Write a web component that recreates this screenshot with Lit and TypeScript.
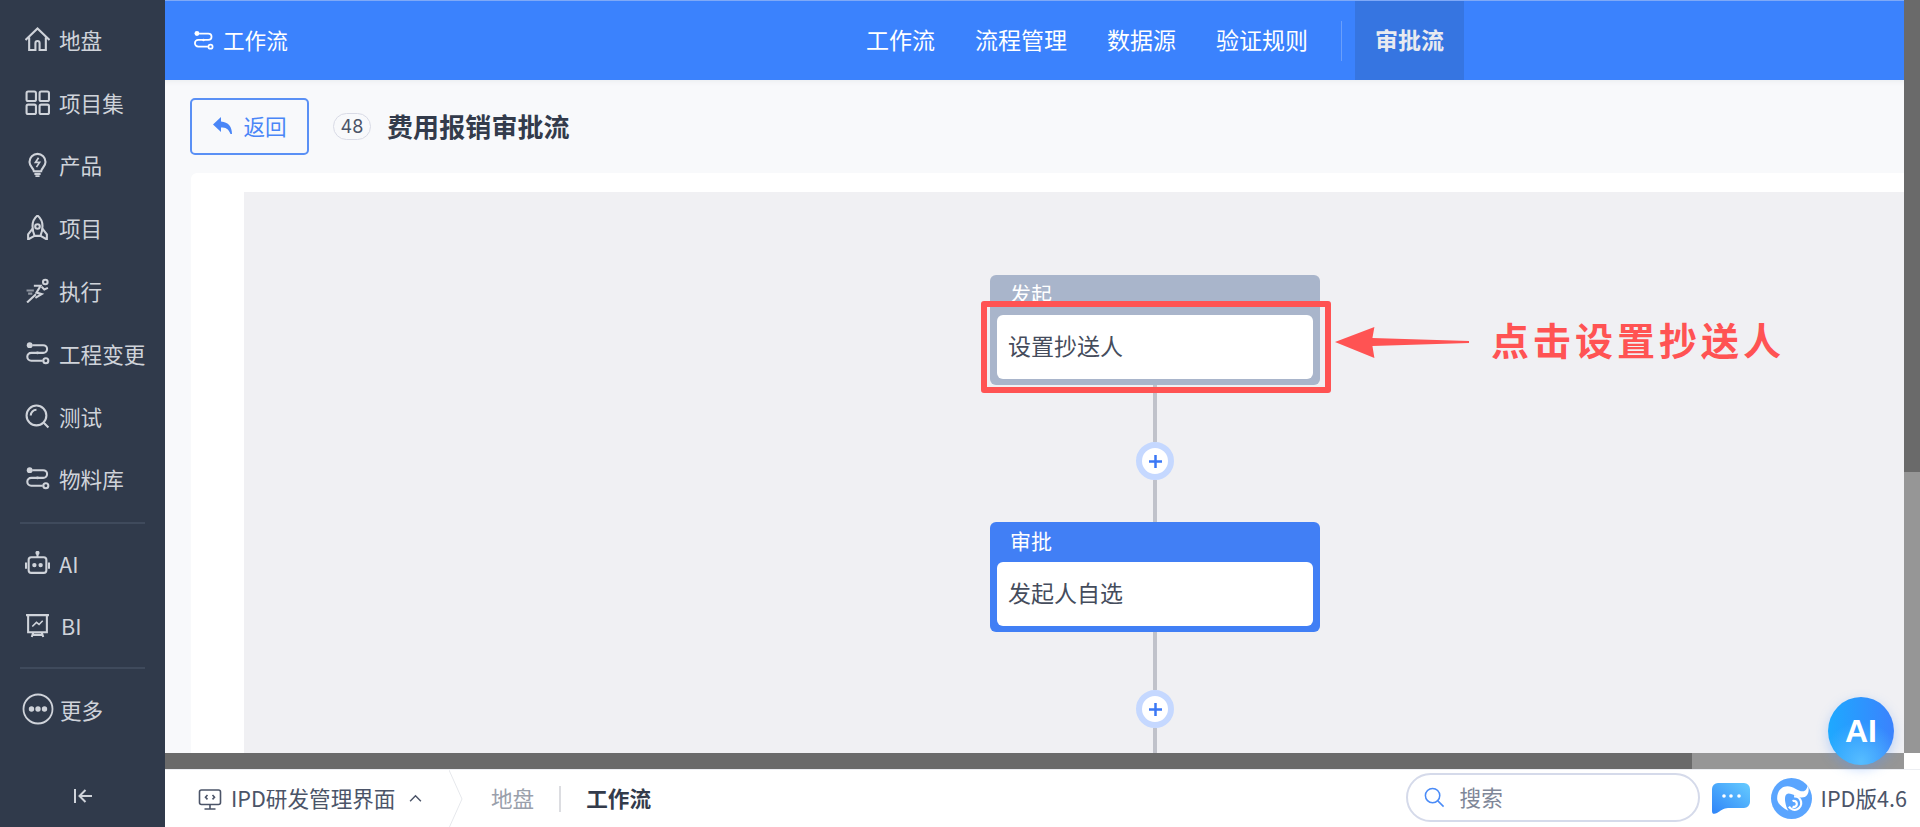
import { LitElement, html, css, svg } from "lit";
import { customElement } from "lit/decorators.js";

const flowIcon = svg`<circle cx="4.5" cy="4" r="2.8" fill="currentColor" stroke="none"/><path d="M7 4h10.5a3.6 3.6 0 0 1 0 7.4H6a3.8 3.8 0 0 0 0 7.6h11"/><circle cx="12" cy="11.4" r="1.4" fill="currentColor" stroke="none"/><circle cx="20" cy="19" r="2.4"/>`;

const NAV = [
  { label: "地盘", icon: svg`<path d="M.5 12.500 12 1.500l11.500 11M4 10v12h6v-6.500a2 2 0 0 1 4 0V22h6V10"/>` },
  { label: "项目集", icon: svg`<rect x="1.500" y="1.500" width="9" height="9" rx="1.500"/><rect x="14" y="1.500" width="9" height="9" rx="1.500"/><rect x="1.500" y="14" width="9" height="9" rx="1.500"/><rect x="14" y="14" width="9" height="9" rx="1.500"/>` },
  { label: "产品", icon: svg`<path d="M8.500 18.500c0-3-4.200-4.200-4.200-9a7.700 7.700 0 0 1 15.400 0c0 4.800-4.200 6-4.200 9z"/><path d="M13 5.500 10 10h4l-3 4.500" stroke-width="1.600"/><path d="M9 21h6M10 23.300h4"/>` },
  { label: "项目", icon: svg`<path d="M12 .5c3.400 2.800 4.800 6.200 4.800 10 0 3.600-.8 6.800-2 9.500H9.200c-1.200-2.700-2-5.900-2-9.500 0-3.800 1.400-7.200 4.800-10z"/><circle cx="12" cy="11" r="2.200"/><path d="M7.300 13 3 18.500v5l6-3.500M16.700 13l4.300 5.500v5L15 20"/>` },
  { label: "执行", icon: svg`<circle cx="19.500" cy="3.800" r="2.200"/><path d="M8.500 7.500h6.500l-4 6.500 5 1.500-6 3.500M16 8.500l2.500 2.500 3.500-1.500M10.500 15.500 2 23.500"/><path d="M1.500 12h7M3 15h4" opacity=".6"/>` },
  { label: "工程变更", icon: flowIcon },
  { label: "测试", icon: svg`<circle cx="11" cy="11" r="9.500"/><path d="m18 18 4.500 4.500M5.500 11A5.500 5.500 0 0 1 11 5.500"/>` },
  { label: "物料库", icon: flowIcon },
];

const searchIcon = svg`<circle cx="10" cy="10" r="7.500"/><path d="m15.500 15.500 6 6"/>`;

@customElement("nav-item")
class NavItem extends LitElement {
  static properties = { label: {} };
  declare label: string;
  static styles = css`
    :host { display: flex; align-items: center; height: 62.8px; padding-left: 25px; gap: 9px; color: #cfd3da; font-size: 21.6px; }
    ::slotted(svg) { width: 25px; height: 25px; fill: none; stroke: currentColor; stroke-width: 2; flex: none; }
  `;
  render() { return html`<slot></slot><span>${this.label}</span>`; }
}

@customElement("app-root")
class AppRoot extends LitElement {
  static styles = css`
    :host { display: grid; grid-template-columns: 165px 1fr; width: 1920px; height: 827px; overflow: hidden; position: relative;
      font-family: "Noto Sans CJK SC", "Noto Sans", sans-serif; background: #fff; }
    * { box-sizing: border-box; }

    .side { background: #303a4b; display: flex; flex-direction: column; padding-top: 8px; }
    .rule { height: 2px; background: #3f4a5c; margin: 11.6px 20px 9px; flex: none; }
    .rule.a { margin: 11px 20px 13px; }
    .rows-ai nav-item { height: 61.500px; }
    .rows-ai nav-item.bi { gap: 11px; }
    .more { color: #cfd3da; display: flex; align-items: center; height: 55px; padding-left: 22px; gap: 6px; font-size: 21.6px; }
    .more svg { width: 32px; height: 32px; fill: none; stroke: currentColor; stroke-width: 1.8; }
    .collapse { margin-top: auto; height: 63px; display: flex; justify-content: center; align-items: center; color: #cfd3da; }
    .collapse svg { width: 22px; height: 20px; fill: none; stroke: currentColor; stroke-width: 2; }

    .main { display: flex; flex-direction: column; min-width: 0; height: 827px; }
    .upper { flex: 1; display: flex; min-height: 0; }
    .col { flex: 1; display: flex; flex-direction: column; min-width: 0; }
    .head { height: 80px; flex: none; background: #3b82fd; color: #fff; border-top: 1px solid #7fa9f7; display: flex; align-items: center; }
    .brand { display: flex; align-items: center; gap: 9px; padding-left: 28px; font-size: 21.6px; width: 681px; flex: none; }
    .brand span { padding-bottom: 2px; }
    .brand svg { width: 21px; height: 21px; fill: none; stroke: currentColor; stroke-width: 2; }
    .tabs { display: flex; align-items: stretch; height: 100%; font-size: 23px; }
    .tab { display: flex; align-items: center; padding: 0 20px 3px; }
    .sep { width: 1px; height: 40px; background: #6a9ffb; align-self: center; margin: 0 13px; }
    .tab.on { background: #3675e1; font-weight: 700; color: #e8eaf0; }

    .page { flex: 1; background: #f8f9fb; padding: 0 0 0 25px; min-height: 0; display: flex; flex-direction: column; box-shadow: inset 0 6px 6px -6px #e4e6ea; }
    .bar { height: 93px; flex: none; display: flex; align-items: center; gap: 24px; }
    .back { width: 119px; height: 57px; border: 2px solid #5a90f5; border-radius: 5px; color: #4a86f7; font-size: 21.6px; display: flex; align-items: center; justify-content: center; gap: 9px; }
    .back span { padding-bottom: 2px; }
    .back svg { width: 22px; height: 20px; fill: currentColor; margin-bottom: 2px; }
    .title { display: flex; align-items: center; gap: 16px; }
    .count { width: 38px; height: 27px; border: 1px solid #d9dbe6; border-radius: 14px; display: flex; align-items: center; justify-content: center; font-size: 18px; color: #4b5468; font-family: "Inter", sans-serif; }
    .name { font-size: 26px; font-weight: 700; color: #333b4b; padding-bottom: 2px; letter-spacing: .1px; }
    .card { flex: 1; background: #fff; margin-left: 1px; border-radius: 6px 0 0 0; padding: 19px 0 0 53px; min-height: 0; display: flex; }
    .canvas { flex: 1; background: #f0f0f3; overflow: hidden; position: relative; padding: 83px 0 0 746px; }

    .flow { width: 330px; display: flex; flex-direction: column; align-items: center; }
    .node { width: 330px; height: 110px; border-radius: 6px; padding: 7px 7px 6px; display: flex; flex-direction: column; flex: none; color: #fff; font-size: 21px; }
    .node.start { background: #a9b5cb; }
    .node.ok { background: #417ff5; }
    .ntitle { height: 33px; padding-left: 13px; line-height: 22px; flex: none; }
    .nbody { flex: 1; background: #fff; border-radius: 6px; color: #454c5c; font-size: 23px; display: flex; align-items: center; padding: 0 0 5px 11px; }
    .wire { width: 4px; background: #c0c2ca; flex: none; }
    .w1 { height: 57px; } .w2 { height: 42px; } .w3 { height: 58px; }
    .plus { width: 38px; height: 38px; flex: none; border-radius: 50%; border: 6px solid #c5d8ff; background: #fff; display: flex; align-items: center; justify-content: center; }
    .plus svg { width: 15px; height: 15px; stroke: #3b78f5; stroke-width: 2.5; fill: none; }

    .hs { height: 16px; flex: none; background: #969696; display: flex; }
    .hs i { width: 1527px; background: #6a6a6a; }
    .vs { width: 16px; flex: none; display: flex; flex-direction: column; background: #969696; margin-bottom: 16px; }
    .vs i { height: 472px; background: #6a6a6a; }

    .foot { height: 58px; flex: none; display: flex; align-items: center; background: #fff; border-top: 1px solid #eceef2; color: #4b5468; font-size: 21.6px; position: relative; }
    .foot span { padding-bottom: 3px; }
    .foot .div { padding: 0; }
    .env { display: flex; align-items: center; gap: 9px; padding-left: 33px; width: 285px; flex: none; white-space: nowrap; }
    .env svg.m { width: 24px; height: 24px; fill: none; stroke: #4b5468; stroke-width: 1.6; flex: none; }
    .env svg.c { width: 13px; height: 9px; fill: none; stroke: #4b5468; stroke-width: 1.6; margin-left: 5px; flex: none; }
    .chev { position: absolute; left: 284px; top: 0; width: 14px; height: 58px; fill: none; stroke: #e6e8ec; stroke-width: 1; }
    .crumb { margin-left: 41px; color: #9aa0ab; }
    .div { width: 2px; height: 26px; background: #dcdde1; margin: 0 25px; }
    .cur { font-weight: 700; color: #333b4b; }
    .right { margin-left: auto; display: flex; align-items: center; }
    .search { width: 294px; height: 49px; border: 2px solid #d5daea; border-radius: 25px; display: flex; align-items: center; padding-left: 15px; gap: 14px; color: #7f8798; margin-top: -2px; }
    .search svg { width: 23px; height: 23px; fill: none; stroke: #4a8bf7; stroke-width: 1.6; }
    .chat { width: 38px; height: 32px; margin-left: 12px; }
    .logo { width: 41px; height: 41px; margin-left: 21px; }
    .ver { margin: 0 13px 0 9px; color: #4b5468; }

    .ai { position: absolute; left: 1828px; top: 697px; width: 66px; height: 68px; border-radius: 50%; color: #fff; font: 700 32px "Liberation Sans", sans-serif; display: flex; align-items: center; justify-content: center;
      background: radial-gradient(circle at 50% 95%, #56bdff 0, rgba(86,189,255,0) 55%), linear-gradient(90deg, #1ea9ff, #3b82fd); box-shadow: 0 4px 12px rgba(80,150,255,.35); }
    .mark { position: absolute; left: 981px; top: 301px; width: 350px; height: 92px; border: 6px solid #ff5353; border-radius: 3px; }
    .arrow { position: absolute; left: 1334px; top: 324px; width: 136px; height: 36px; fill: #ff5353; }
    .note { position: absolute; left: 1491px; top: 314px; line-height: 50px; font-size: 38px; font-weight: 700; color: #ff5353; letter-spacing: 4px; white-space: nowrap; }
  `;

  render() {
    const plus = html`<div class="plus"><svg viewBox="0 0 15 15"><path d="M7.500 1v13M1 7.500h13"/></svg></div>`;
    return html`
      <aside class="side">
        ${NAV.map((n) => html`<nav-item .label=${n.label}><svg viewBox="0 0 24 24">${n.icon}</svg></nav-item>`)}
        <div class="rule"></div>
        <div class="rows-ai">
          <nav-item .label=${"AI"}><svg viewBox="0 0 24 24"><path d="M12 1v5"/><circle cx="12" cy="1.800" r="1" fill="currentColor"/><rect x="3.500" y="6" width="17" height="15" rx="2.500"/><path d="M1 11v6M23 11v6"/><circle cx="9" cy="13.500" r="1.100" fill="currentColor"/><circle cx="15" cy="13.500" r="1.100" fill="currentColor"/></svg></nav-item>
          <nav-item class="bi" .label=${"BI"}><svg viewBox="0 0 24 24"><path d="M1 2h22M3 2v16.500h18V2M8 18.500 6.500 23M16 18.500l1.500 4.500M7.500 21h9"/><path d="m7 13 4-4 2.500 2L17 7.500" stroke-width="1.500"/></svg></nav-item>
        </div>
        <div class="rule a"></div>
        <div class="more"><svg viewBox="0 0 32 32"><circle cx="16" cy="16" r="14.500"/><circle cx="9.500" cy="16" r="1.800" fill="currentColor"/><circle cx="16" cy="16" r="1.800" fill="currentColor"/><circle cx="22.500" cy="16" r="1.800" fill="currentColor"/></svg><span>更多</span></div>
        <div class="collapse"><svg viewBox="0 0 22 20"><path d="M3 3v14M20 10H8M13.500 4 7.500 10l6 6"/></svg></div>
      </aside>
      <div class="main">
        <div class="upper">
          <div class="col">
            <header class="head">
              <div class="brand"><svg viewBox="0 0 24 24">${flowIcon}</svg><span>工作流</span></div>
              <nav class="tabs">
                <span class="tab">工作流</span><span class="tab">流程管理</span><span class="tab">数据源</span><span class="tab">验证规则</span>
                <span class="sep"></span><span class="tab on">审批流</span>
              </nav>
            </header>
            <div class="page">
              <div class="bar">
                <div class="back"><svg viewBox="0 0 22 20"><path d="M9 1 1 8.500 9 16v-4.500c4.500 0 7.500 1 9.500 6.500h1.500c0-7-3.500-12-11-12.500z"/></svg><span>返回</span></div>
                <div class="title"><span class="count">48</span><span class="name">费用报销审批流</span></div>
              </div>
              <div class="card">
                <div class="canvas">
                  <div class="flow">
                    <div class="node start"><div class="ntitle">发起</div><div class="nbody">设置抄送人</div></div>
                    <div class="wire w1"></div>${plus}<div class="wire w2"></div>
                    <div class="node ok"><div class="ntitle">审批</div><div class="nbody">发起人自选</div></div>
                    <div class="wire w3"></div>${plus}<div class="wire w2"></div>
                  </div>
                </div>
              </div>
            </div>
            <div class="hs"><i></i></div>
          </div>
          <div class="vs"><i></i></div>
        </div>
        <footer class="foot">
          <div class="env">
            <svg class="m" viewBox="0 0 24 24"><rect x="1.500" y="3" width="21" height="14.500" rx="2"/><path d="M12 17.500V22M6.500 22h11M9.500 8 7.500 10.200l2 2.200M14.500 8l2 2.200-2 2.200"/></svg>
            <span>IPD研发管理界面</span>
            <svg class="c" viewBox="0 0 14 10"><path d="M1 8l6-6 6 6"/></svg>
          </div>
          <svg class="chev" viewBox="0 0 14 58"><path d="M0 0 13 29 0 58"/></svg>
          <span class="crumb">地盘</span><span class="div"></span><span class="cur">工作流</span>
          <div class="right">
            <div class="search"><svg viewBox="0 0 24 24">${searchIcon}</svg><span>搜索</span></div>
            <svg class="chat" viewBox="0 0 38 32"><defs><linearGradient id="cg" x1="0" y1="1" x2="1" y2="0"><stop offset="0" stop-color="#2f84f8"/><stop offset="1" stop-color="#66ccff"/></linearGradient></defs><path d="M6 0h26a6 6 0 0 1 6 6v13a6 6 0 0 1-6 6H16c-4 0-8 3-11 5-3 1.500-5 1-5-2V6a6 6 0 0 1 6-6z" fill="url(#cg)"/><circle cx="12" cy="13" r="1.800" fill="#fff"/><circle cx="19" cy="13" r="1.800" fill="#fff"/><circle cx="27" cy="13" r="1.800" fill="#fff"/></svg>
            <svg class="logo" viewBox="0 0 40 40"><circle cx="20" cy="20" r="20" fill="#5aa5ff"/><path d="M6 20C6 13 10 8 16 8c6 0 10 5 15 5 3 0 4-3 5-6 2 6 0 12-6 12-5 0-8-4-13-4-3 0-4 4-3 9 .5 3 1.500 6 3 8-6-3-11-7-11-12z" fill="#fff"/><path d="M17.500 28a6.500 6.500 0 1 0 5-10" fill="none" stroke="#fff" stroke-width="2.200"/><path d="M21 28a3 3 0 1 0 0-5.500" fill="none" stroke="#fff" stroke-width="2.200"/></svg>
            <span class="ver">IPD版4.6</span>
          </div>
        </footer>
      </div>
      <div class="mark"></div>
      <svg class="arrow" viewBox="0 0 138 36" preserveAspectRatio="none"><path d="M1 18 41 3l-2 11 98 3v2l-98 3 2 12z"/></svg>
      <div class="note">点击设置抄送人</div>
      <div class="ai">AI</div>
    `;
  }
}
